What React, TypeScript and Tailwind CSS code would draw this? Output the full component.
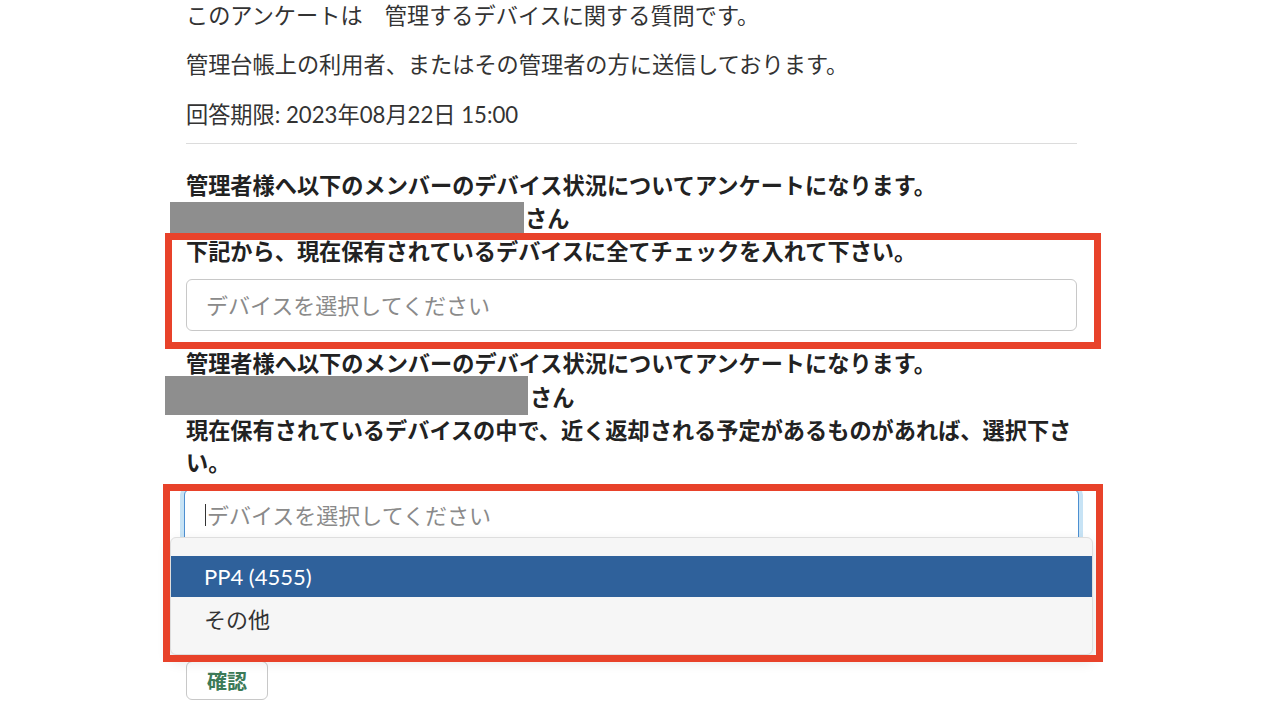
import React from 'react';

const font = "font-['Lato','Noto_Sans_CJK_JP',sans-serif]";

export default function App() {
  return (
    <div className={`relative min-h-[720px] w-[1280px] overflow-hidden bg-white text-[#333] ${font}`}>
      <div className="pl-[186px] w-[1077px]">
        {/* Intro */}
        <p className="text-[22.2px] leading-[32px]">このアンケートは　管理するデバイスに関する質問です。</p>
        <p className="mt-[17px] text-[22.2px] leading-[32px]">管理台帳上の利用者、またはその管理者の方に送信しております。</p>
        <p className="mt-[18px] text-[22.2px] leading-[32px]">回答期限: 2023年08月22日 15:00</p>
        <div className="mt-[12px] h-px bg-[#dcdcdc]" />

        {/* Question 1 */}
        <div className="mt-[26px] text-[22.2px] font-bold text-[#222]">
          <div className="leading-[32px]">管理者様へ以下のメンバーのデバイス状況についてアンケートになります。</div>
          <div className="flex h-[34px] items-center leading-[32px]">
            <span className="-ml-[16px] h-[34px] w-[354px] shrink-0 bg-[#8e8e8e]" />
            <span className="ml-[1px]">さん</span>
          </div>
          <div className="leading-[32px]">下記から、現在保有されているデバイスに全てチェックを入れて下さい。</div>
        </div>
        <div className="mt-[11px] flex h-[52px] items-center rounded-md border border-[#c8c8c8] bg-white px-[19px] text-[22px] text-[#8a8a8a]">
          デバイスを選択してください
        </div>

        {/* Question 2 */}
        <div className="mt-[17px] text-[22.2px] font-bold text-[#222]">
          <div className="leading-[32px]">管理者様へ以下のメンバーのデバイス状況についてアンケートになります。</div>
          <div className="flex h-[35px] items-center leading-[32px]">
            <span className="-ml-[21px] -mt-[4px] h-[39px] w-[363px] shrink-0 bg-[#8e8e8e]" />
            <span className="ml-[2px]">さん</span>
          </div>
          <div className="leading-[32px]">現在保有されているデバイスの中で、近く返却される予定があるものがあれば、選択下さい。</div>
        </div>

        {/* Open select */}
        <div className="relative mt-[10px]">
          <div className="-mx-[2px] flex h-[52px] items-center rounded-t-md border border-[#4d8fd1] bg-white px-[20px] text-[22px] text-[#8a8a8a] shadow-[0_0_0_4px_#c7e3f5]">
            <span className="mr-px h-[22px] w-px bg-[#333]" />
            デバイスを選択してください
          </div>
          <div className="absolute left-[-16px] right-[-16px] top-[48px] z-10 rounded-md border border-[#dedede] bg-[#f6f6f6] pt-[18px] pb-[13px] shadow-[0_6px_14px_rgba(0,0,0,0.12)]">
            <div className="flex h-[41px] items-center bg-[#2f619b] px-[33px] text-[22px] text-white">PP4 (4555)</div>
            <div className="flex h-[44px] items-center px-[33px] text-[22px] text-[#333]">その他</div>
          </div>
        </div>

        <button className="mt-[120px] flex h-[39px] w-[82px] items-center justify-center rounded-md border border-[#c8c8c8] bg-white text-[20px] font-bold text-[#3c7a58]">
          確認
        </button>
      </div>

      {/* Annotation frames */}
      <div className="pointer-events-none absolute left-[165px] top-[233px] z-20 h-[116px] w-[936px] border-[7px] border-[#e8422a]" />
      <div className="pointer-events-none absolute left-[163px] top-[484px] z-20 h-[178px] w-[940px] border-[7px] border-[#e8422a]" />
    </div>
  );
}
